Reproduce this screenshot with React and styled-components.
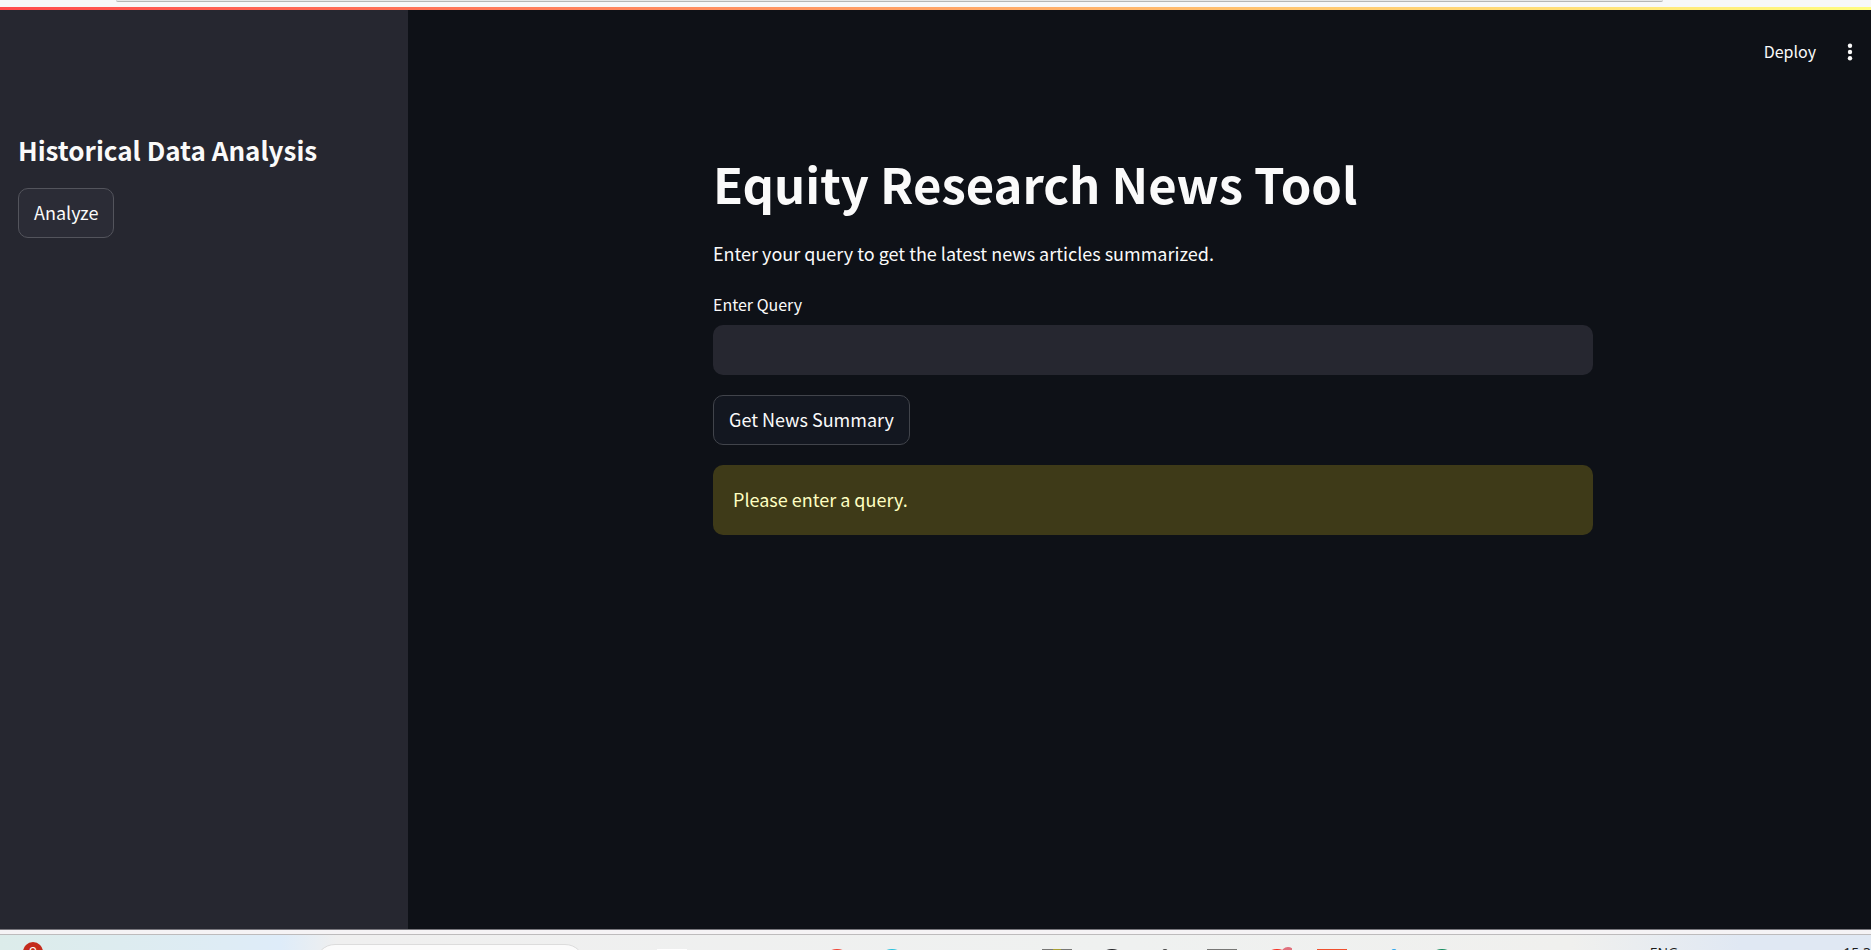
import React, { useState } from "react";
import styled, { createGlobalStyle } from "styled-components";

const GlobalStyle = createGlobalStyle`
  *, *::before, *::after { box-sizing: border-box; }
  body {
    margin: 0;
    background: #0e1117;
    color: #fafafa;
    font-family: "Source Sans Pro", "Noto Sans CJK SC", sans-serif;
    font-size: 18px;
    line-height: 32px;
  }
`;

const Screen = styled.div`
  height: 100vh;
  display: flex;
  flex-direction: column;
  overflow: hidden;
`;

const BrowserBar = styled.div`
  flex: none;
  height: 7px;
  padding: 0 208px 0 116px;
  background: #f7f8f8;
  display: flex;
  align-items: flex-start;
`;

const AddressEdge = styled.div`
  flex: 1;
  height: 2px;
  border-bottom: 1px solid #b4b6b5;
  border-radius: 0 0 8px 8px;
  background: #e6e8e7;
`;

const Decoration = styled.div`
  flex: none;
  height: 3px;
  background: linear-gradient(90deg, #ff4b4b, #fffd80);
`;

const Workspace = styled.div`
  flex: 1;
  min-height: 0;
  display: flex;
`;

const Sidebar = styled.aside`
  flex: none;
  width: 408px;
  padding: 122px 18px 0;
  background: #262730;
`;

const SidebarTitle = styled.h2`
  margin: 0 0 20px;
  font-size: 26px;
  line-height: 36px;
  font-weight: 700;
`;

const Button = styled.button`
  height: 50px;
  padding: 0 15px 2px;
  border: 1px solid ${(p) => (p.$raised ? "#53545c" : "#41444b")};
  border-radius: 10px;
  background: ${(p) => (p.$raised ? "#2b2c36" : "#131720")};
  color: inherit;
  font: inherit;
  white-space: nowrap;
`;

const Main = styled.main`
  flex: 1;
  min-width: 0;
  padding-left: 27px;
  display: flex;
  flex-direction: column;
`;

const Toolbar = styled.header`
  height: 84px;
  padding: 0 14px 0 0;
  display: flex;
  align-items: center;
  justify-content: flex-end;
  gap: 27px;
`;

const ToolbarButton = styled.button`
  padding: 0 0 2px;
  border: 0;
  background: none;
  color: inherit;
  font: inherit;
  font-size: 16px;
  line-height: 32px;
  display: flex;
`;

const Content = styled.div`
  width: 100%;
  max-width: 920px;
  margin: 0 auto;
  padding: 53px 20px 0;
`;

const Title = styled.h1`
  margin: 0 0 19px;
  font-size: 49px;
  line-height: 72px;
  font-weight: 700;
`;

const Intro = styled.p`
  margin: 0 0 22px;
  line-height: 30px;
`;

const Label = styled.label`
  display: block;
  margin-bottom: 7px;
  font-size: 16px;
  line-height: 28px;
`;

const TextInput = styled.input`
  display: block;
  width: 100%;
  height: 50px;
  margin-bottom: 20px;
  padding: 0 15px;
  border: 0;
  border-radius: 10px;
  background: #262730;
  color: inherit;
  font: inherit;
`;

const Warning = styled.div`
  margin-top: 20px;
  padding: 18px 20px 20px;
  border-radius: 10px;
  background: #3e3a18;
  color: #ffffc2;
`;

const WindowEdge = styled.div`
  flex: none;
  height: 6px;
  border-top: 1px solid #77767c;
  border-bottom: 1px solid #bdbbbc;
  background: #f5f3f5;
`;

const Taskbar = styled.footer`
  flex: none;
  height: 15px;
  padding: 0 0 0 23px;
  overflow: hidden;
  display: flex;
  align-items: flex-start;
  background: linear-gradient(90deg, #dcecea 0%, #deecf5 12%, #deecf9 15%, #efefef 18%, #eff1f0 60%, #f0f0ee 84%, #e0e8f3 93%, #e0e8f3 100%);
  color: #1b1b1b;
  font-family: "Open Sans", sans-serif;
  font-size: 14px;
  line-height: 20px;
`;

const Notice = styled.span`
  flex: none;
  width: 20px;
  height: 20px;
  margin-top: 7px;
  border-radius: 50%;
  background: #c42b1c;
  color: #fff;
  font-size: 14px;
  line-height: 20px;
  text-align: center;
`;

const SearchPill = styled.div`
  flex: none;
  width: 270px;
  height: 40px;
  margin: 9px 72px 0 272px;
  border: 1px solid #dcdcdc;
  border-radius: 20px;
  background: #fbfbfb;
`;

const AppIcons = styled.div`
  flex: none;
  display: flex;
  gap: 25px;
`;

const AppIcon = styled.svg`
  width: 30px;
  height: 30px;
  margin-top: 4px;
`;

const Tray = styled.div`
  flex: none;
  margin-left: auto;
  padding-top: 8px;
  display: flex;
  gap: 165px;
`;

const APPS = [
  { box: "#ffffff" },
  {},
  {},
  { dome: "#f04030" },
  { dome: "#26c0dc" },
  {},
  {},
  { box: "#777775", accent: "#a8a032" },
  { dome: "#222226" },
  { tip: "#444444", at: 13 },
  { box: "#777775" },
  { dome: "#f62a1c", badge: true },
  { box: "#f0502e" },
  { tip: "#2ba5ee", at: 22 },
  { dome: "#138a5c" },
];

function TaskIcon({ box, accent, dome, tip, at, badge }) {
  return (
    <AppIcon viewBox="0 0 30 30" aria-hidden="true">
      {box && <rect y="10" width="30" height="20" fill={box} />}
      {accent && <rect x="11" y="10" width="8" height="4" fill={accent} />}
      {dome && <circle cx="15" cy="25" r="15" fill={dome} />}
      {tip && <circle cx={at} cy="13" r="3" fill={tip} />}
      {badge && <circle cx="26" cy="15" r="7" fill="#e0707c" />}
    </AppIcon>
  );
}

export default function App() {
  const [query, setQuery] = useState("");
  return (
    <Screen>
      <GlobalStyle />
      <BrowserBar>
        <AddressEdge />
      </BrowserBar>
      <Decoration />
      <Workspace>
        <Sidebar>
          <SidebarTitle>Historical Data Analysis</SidebarTitle>
          <Button type="button" $raised>Analyze</Button>
        </Sidebar>
        <Main>
          <Toolbar>
            <ToolbarButton type="button">Deploy</ToolbarButton>
            <ToolbarButton type="button" aria-label="Main menu">
              <svg width="14" height="20" viewBox="0 0 14 20" fill="#fafafa">
                <circle cx="7" cy="4.8" r="2.2" />
                <circle cx="7" cy="11" r="2.2" />
                <circle cx="7" cy="17.2" r="2.2" />
              </svg>
            </ToolbarButton>
          </Toolbar>
          <Content>
            <Title>Equity Research News Tool</Title>
            <Intro>Enter your query to get the latest news articles summarized.</Intro>
            <Label htmlFor="query">Enter Query</Label>
            <TextInput id="query" type="text" value={query} onChange={(e) => setQuery(e.target.value)} />
            <Button type="button">Get News Summary</Button>
            <Warning role="alert">Please enter a query.</Warning>
          </Content>
        </Main>
      </Workspace>
      <WindowEdge />
      <Taskbar>
        <Notice>9</Notice>
        <SearchPill />
        <AppIcons>
          {APPS.map((app, i) => (
            <TaskIcon key={i} {...app} />
          ))}
        </AppIcons>
        <Tray>
          <span>ENG</span>
          <span>15:3</span>
        </Tray>
      </Taskbar>
    </Screen>
  );
}
